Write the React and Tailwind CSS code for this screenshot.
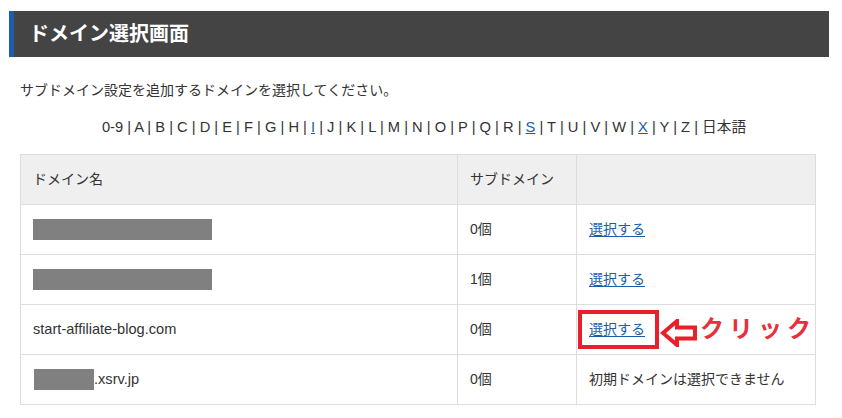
import React from 'react';

const letters = ['0-9', 'A', 'B', 'C', 'D', 'E', 'F', 'G', 'H', 'I', 'J', 'K', 'L', 'M', 'N', 'O', 'P', 'Q', 'R', 'S', 'T', 'U', 'V', 'W', 'X', 'Y', 'Z', '日本語'];
const linked = ['I', 'S', 'X'];

const rows = [
  { mask: 179, count: '0個', select: true },
  { mask: 179, count: '1個', select: true },
  { name: 'start-affiliate-blog.com', count: '0個', select: true, mark: true },
  { mask: 60, suffix: '.xsrv.jp', count: '0個', select: false },
];

const SelectLink = () => (
  <a href="#" className="text-[#1b5ea8] underline underline-offset-2">選択する</a>
);

export default function App() {
  return (
    <div className="w-[842px] h-[418px] bg-white text-[#333] text-[14px] overflow-hidden" style={{ fontFamily: '"Liberation Sans", "Noto Sans CJK JP", sans-serif' }}>
      {/* 見出し */}
      <div className="mt-[11px] ml-[9px] mr-[13px] h-[46px] bg-[#444] border-l-[5px] border-[#1c5fa8] flex items-center pl-[15px]">
        <h1 className="text-white text-[20px] font-bold leading-none">ドメイン選択画面</h1>
      </div>

      <div className="px-[20px]">
        <p className="mt-[23px] leading-[20px]">サブドメイン設定を追加するドメインを選択してください。</p>

        <div className="mt-[17px] leading-[20px] text-center text-[14.7px] pl-[6px]">
          {letters.map((l, i) => (
            <span key={l}>
              {linked.includes(l) ? <a href="#" className="text-[#1b5ea8] underline">{l}</a> : l}
              {i < letters.length - 1 && ' | '}
            </span>
          ))}
        </div>

        <table className="mt-[17px] table-fixed border-collapse w-[795px]">
          <colgroup>
            <col className="w-[437px]" />
            <col className="w-[119px]" />
            <col className="w-[239px]" />
          </colgroup>
          <thead>
            <tr className="h-[50px] bg-[#efefef]">
              <th className="border border-[#ddd] px-[12px] text-left font-normal">ドメイン名</th>
              <th className="border border-[#ddd] px-[12px] text-left font-normal">サブドメイン</th>
              <th className="border border-[#ddd] px-[12px]"></th>
            </tr>
          </thead>
          <tbody>
            {rows.map((r, i) => (
              <tr key={i} className="h-[50px]">
                <td className="border border-[#ddd] px-[12px]">
                  {r.name ? (
                    <span className="text-[14.6px]">{r.name}</span>
                  ) : (
                    <div className="flex items-center">
                      <span className={`inline-block h-[21px] bg-[#808080] ${r.suffix ? 'ml-[1px]' : ''}`} style={{ width: r.mask }}></span>
                      {r.suffix && <span className="text-[14.6px]">{r.suffix}</span>}
                    </div>
                  )}
                </td>
                <td className="border border-[#ddd] px-[12px]">{r.count}</td>
                <td className="border border-[#ddd] px-[12px] relative">
                  {r.select ? <SelectLink /> : '初期ドメインは選択できません'}
                  {r.mark && (
                    <>
                      <div className="absolute left-[1px] top-[5px] w-[81px] h-[39px] border-[4px] border-[#e8202a]"></div>
                      <svg className="absolute left-[83px] top-[14px]" width="38" height="28" viewBox="0 0 38 28">
                        <polygon points="3,14 17,2 17,8.5 35,8.5 35,19.5 17,19.5 17,26" fill="none" stroke="#e8202a" strokeWidth="4" strokeLinejoin="miter" />
                      </svg>
                      <span className="absolute left-[123px] top-[12px] text-[24px] leading-none font-bold tracking-[5px] text-[#e8303c] whitespace-nowrap">クリック</span>
                    </>
                  )}
                </td>
              </tr>
            ))}
          </tbody>
        </table>
      </div>
    </div>
  );
}
